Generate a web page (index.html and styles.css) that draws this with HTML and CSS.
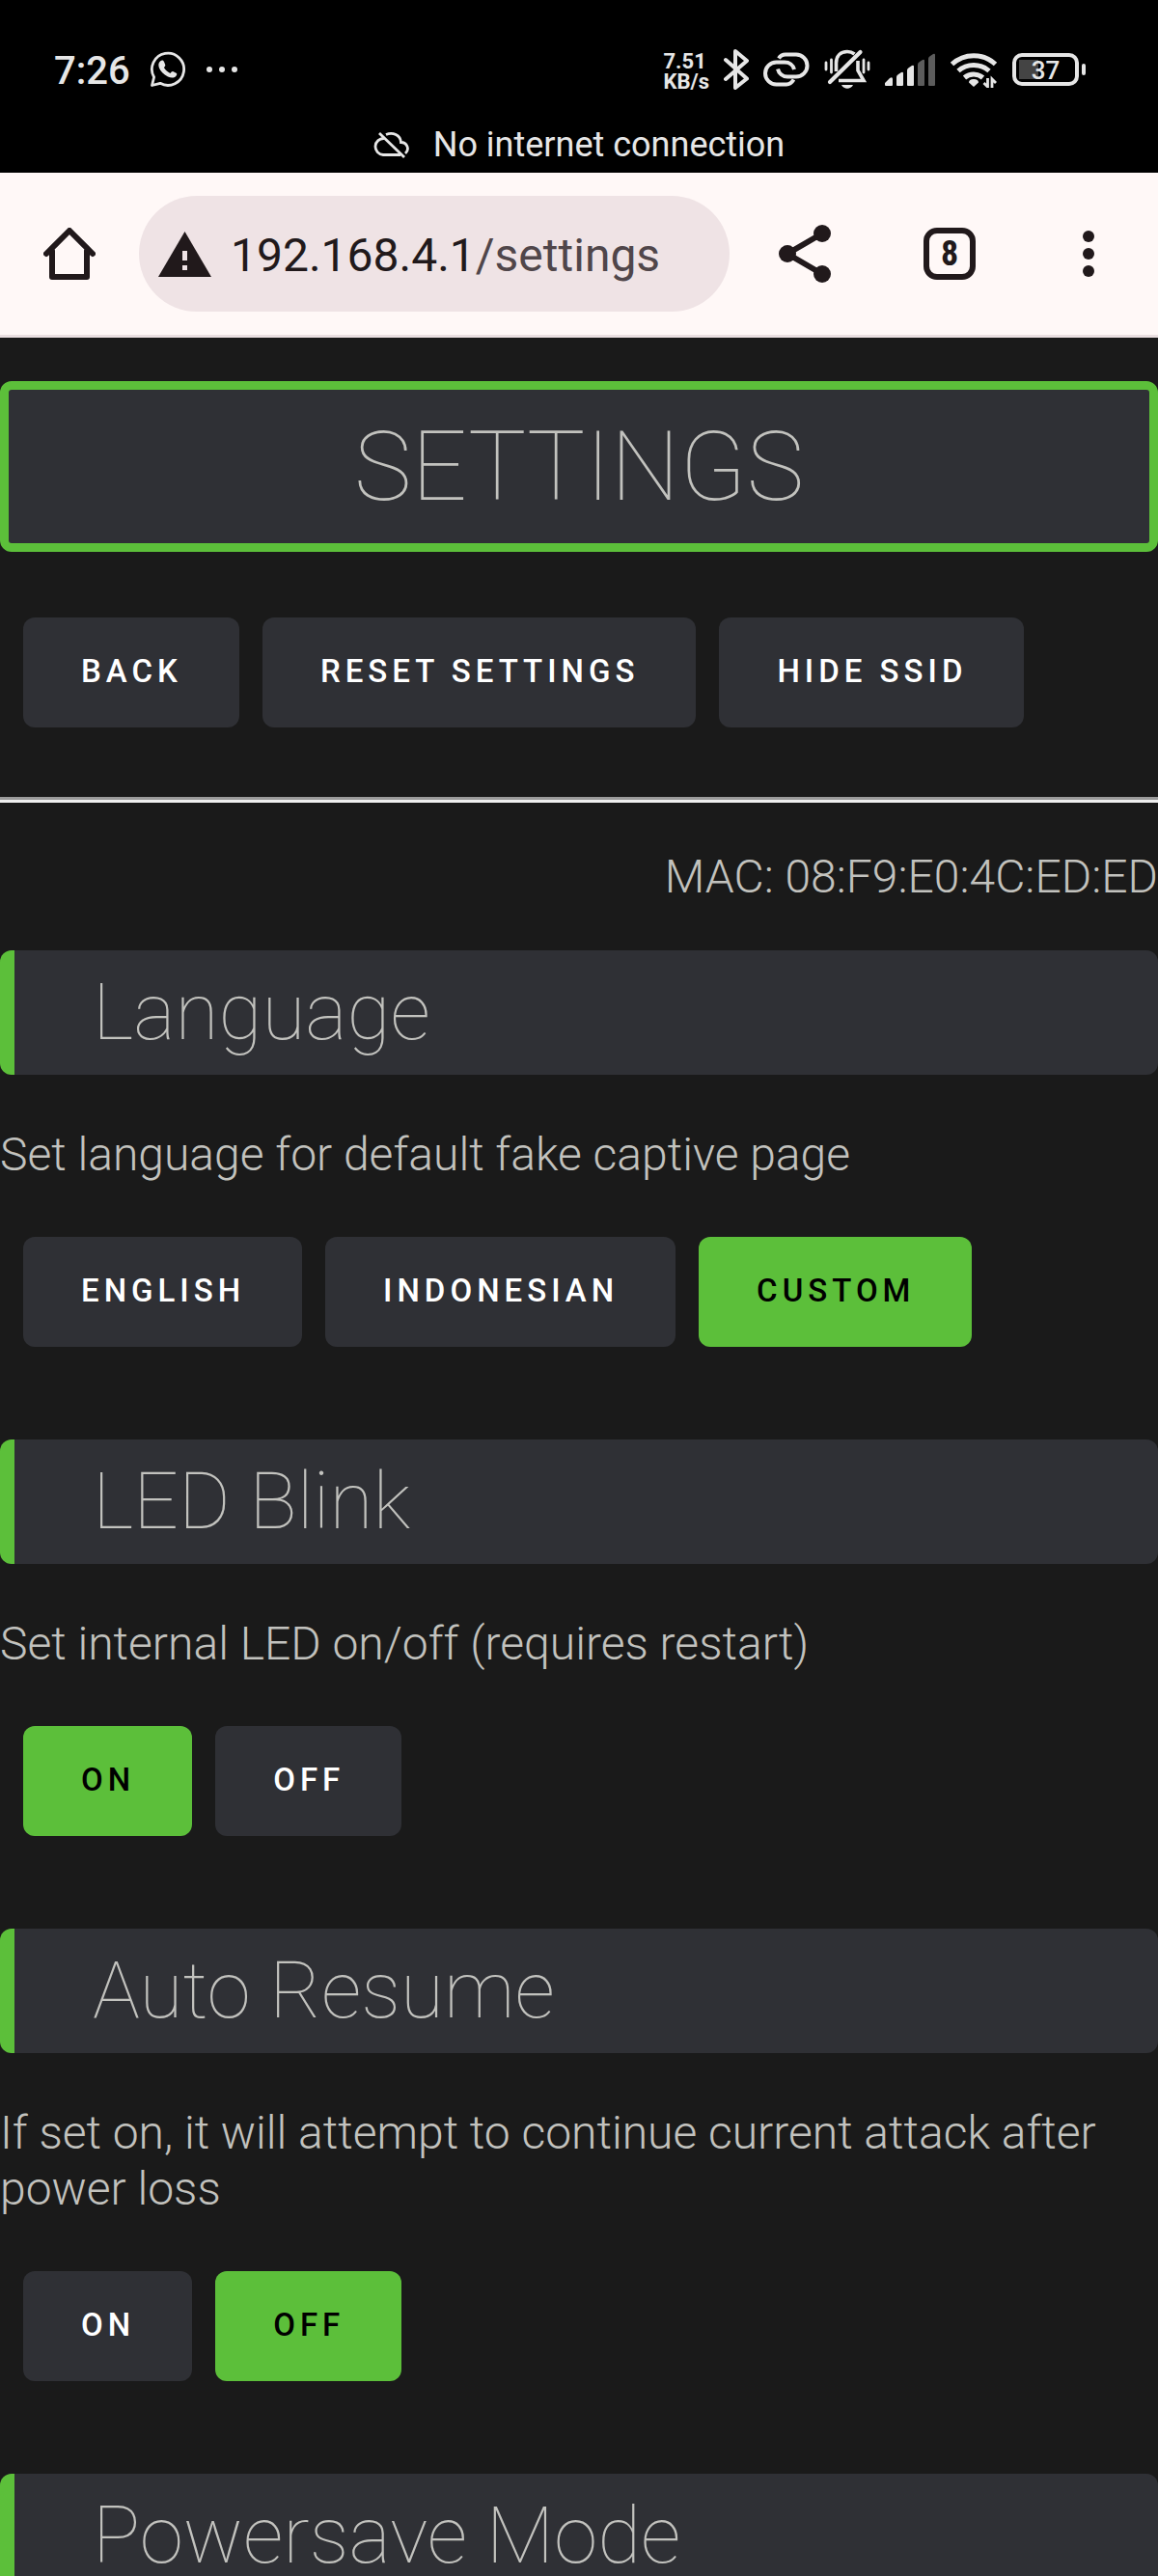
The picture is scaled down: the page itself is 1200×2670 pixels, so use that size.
FILE: index.html
```html
<!DOCTYPE html>
<html lang="en">
<head>
<meta charset="utf-8">
<meta name="viewport" content="width=device-width, initial-scale=1">
<title>Settings</title>
<link rel="stylesheet" href="styles.css">
</head>
<body>
<header class="status">
  <div class="status-row">
    <div class="status-left">
      <span class="clock">7:26</span>
      <svg class="whatsapp" width="38" height="38" viewBox="0 0 38 38" aria-hidden="true">
        <path d="M2.500 35.500 4.600 27A16.600 16.600 0 1 1 11 33.300Z" fill="none" stroke="currentColor" stroke-width="2.800" stroke-linejoin="round"/>
        <path d="M11 10.500c2-1.600 3.500-.8 4 .6l1.200 3c.4 1.200-.3 2-1.300 3 1.700 3 3.800 4.700 6.500 5.800 1.200-1.300 2-2.300 3.200-1.700l3 1.500c1.200.6.7 2.200-.3 3.200-2 2-5 1.900-8.300.5-4.600-2-7.800-5.600-9.200-9.400-.9-2.600-.5-5 1.200-6.500z" fill="currentColor"/>
      </svg>
      <svg width="34" height="8" viewBox="0 0 34 8" fill="currentColor" aria-hidden="true"><circle cx="4" cy="4" r="3"/><circle cx="17" cy="4" r="3"/><circle cx="30" cy="4" r="3"/></svg>
    </div>
    <div class="status-right">
      <span class="speed">7.51<br>KB/s</span>
      <svg width="26" height="42" viewBox="0 0 26 42" fill="none" stroke="currentColor" stroke-width="4" stroke-linejoin="round" stroke-linecap="round" aria-hidden="true"><path d="M2 11 24 30.500 12 40V2L24 12 2 31"/></svg>
      <svg class="link" width="48" height="36" viewBox="0 0 48 36" fill="none" stroke="currentColor" stroke-width="4" aria-hidden="true"><path d="M16 6.500C18 3 20 2.500 23 2.500h11a11.500 11.500 0 0 1 0 23h-9c-5 0-9-3.500-10-8"/><path d="M31.500 28.500C29 32.500 27 33.500 24 33.500H13.500a11.500 11.500 0 0 1 0-23H22c5 0 9 3 10 7.500"/></svg>
      <svg class="bell" width="48" height="42" viewBox="0 0 48 42" fill="none" stroke="currentColor" stroke-width="3.600" aria-hidden="true"><path d="M12.500 23V14.500C12.500 7 17 2.500 24 2.500c3 0 5.500 1 7.500 2.500M35 12v10l6 10.500H15"/><path d="M6 34 37.500 3" stroke-width="4.200" stroke-linecap="round"/><path d="M18 37h12c-2.500 5-9.500 5-12 0z" fill="currentColor" stroke="none"/><path d="M2 14v7M7.500 11v13M41 11v13M46 14v7" stroke-width="2.800" stroke-linecap="round"/></svg>
      <svg class="signal" width="52" height="34" viewBox="0 0 52 34" fill="currentColor" aria-hidden="true"><path d="M0 33v-2l5-5q3-2 3 1v6q0 1-1 1H1q-1 0-1-1zM12 33V25q0-2 2-3l3-2q2-1 2 1v12q0 1-1 1h-5q-1 0-1-1zM23 33V18q0-2 2-3l3-2q2-1 2 1v19q0 1-1 1h-5q-1 0-1-1z"/><path d="M34 33V12q0-2 2-3l3-2q2-1 2 1v25q0 1-1 1h-5q-1 0-1-1zM45 33V6q0-2 2-3l3-2q2-1 2 1v31q0 1-1 1h-5q-1 0-1-1z" fill="#5c5c5c"/></svg>
      <svg class="wifi" width="50" height="38" viewBox="0 0 50 38" fill="none" stroke="currentColor" stroke-width="5" aria-hidden="true"><path d="M2.500 13.500a33 33 0 0 1 45 0M9 20.500a24 24 0 0 1 32 0M15.500 27.500a14.500 14.500 0 0 1 19 0"/><path d="m25 37-5-4.500q0-3.500 5-3.500t5 3.500z" fill="currentColor" stroke="none"/><path d="M39.500 28v9l-4-4M44 38v-9l4 4" stroke-width="2.800"/></svg>
      <div class="battery"><span class="battery-text">37</span></div>
    </div>
  </div>
  <div class="offline">
    <svg width="38" height="28" viewBox="0 0 38 28" fill="none" stroke="currentColor" stroke-width="2.800" aria-hidden="true"><path d="M11 7.500A8.500 8.500 0 1 0 10 24.500h18M13 3.500C20 .5 28 4 28.500 11.500c6 0 9.500 7 4.500 11.500M6 2l26 25"/></svg>
    <span>No internet connection</span>
  </div>
</header>

<nav class="toolbar" aria-label="Browser">
  <button class="tool home" aria-label="Home"><svg width="54" height="54" viewBox="0 0 54 54" fill="none" stroke="currentColor" stroke-width="6" stroke-linejoin="round" stroke-linecap="round" aria-hidden="true"><path d="M3 27 27 3l24 24M9 24v27h36V24"/></svg></button>
  <div class="omnibox">
    <svg width="55" height="47" viewBox="0 0 55 47" aria-hidden="true"><path d="M27.500 0 55 47H0Z" fill="currentColor"/><path d="M25 20h5v10h-5zM25 35h5v5h-5z" fill="#efe3e5"/></svg>
    <a class="url" href="#settings">192.168.4.1<span class="path">/settings</span></a>
  </div>
  <div class="tools">
    <button class="tool" aria-label="Share"><svg width="54" height="60" viewBox="0 0 54 60" fill="currentColor" stroke="currentColor" aria-hidden="true"><path d="M45 9 9 30l36 21" fill="none" stroke-width="6"/><g stroke="none"><circle cx="45" cy="9" r="9"/><circle cx="9" cy="30" r="9"/><circle cx="45" cy="51" r="9"/></g></svg></button>
    <button class="tool tabs" aria-label="8 open tabs">8</button>
    <button class="tool" aria-label="Menu"><svg width="12" height="48" viewBox="0 0 12 48" fill="currentColor" aria-hidden="true"><circle cx="6" cy="6" r="6"/><circle cx="6" cy="24" r="6"/><circle cx="6" cy="42" r="6"/></svg></button>
  </div>
</nav>

<main class="page" id="settings">
  <h1 class="title">SETTINGS</h1>
  <div class="buttons">
    <button class="btn">BACK</button>
    <button class="btn">RESET SETTINGS</button>
    <button class="btn">HIDE SSID</button>
  </div>
  <hr class="rule">
  <p class="mac">MAC: 08:F9:E0:4C:ED:ED</p>

  <section class="setting">
    <h2 class="heading">Language</h2>
    <p class="text">Set language for default fake captive page</p>
    <div class="buttons">
      <button class="btn">ENGLISH</button>
      <button class="btn">INDONESIAN</button>
      <button class="btn active">CUSTOM</button>
    </div>
  </section>
  <section class="setting">
    <h2 class="heading">LED Blink</h2>
    <p class="text">Set internal LED on/off (requires restart)</p>
    <div class="buttons">
      <button class="btn active">ON</button>
      <button class="btn">OFF</button>
    </div>
  </section>
  <section class="setting">
    <h2 class="heading">Auto Resume</h2>
    <p class="text">If set on, it will attempt to continue current attack after power loss</p>
    <div class="buttons">
      <button class="btn">ON</button>
      <button class="btn active">OFF</button>
    </div>
  </section>
  <section class="setting">
    <h2 class="heading">Powersave Mode</h2>
  </section>
</main>
</body>
</html>
```
FILE: styles.css
```css
* {
  box-sizing: border-box;
}

html {
  height: 100%;
}

body {
  display: flex;
  flex-direction: column;
  height: 100%;
  margin: 0;
  background: #1a1a1a;
  color: #c2c2be;
  font-family: Roboto, "Liberation Sans", sans-serif;
  font-size: 48px;
  font-weight: 300;
  line-height: 58px;
}

h1, h2, p {
  margin: 0;
}

button {
  border: 0;
  padding: 0;
  background: none;
  color: inherit;
  font-family: inherit;
}

svg {
  display: block;
  flex: none;
}

/* Phone status bar */
.status {
  flex: none;
  padding: 44px 0 8px;
  background: #000;
  color: #e6e6e6;
}

.status-row,
.status-left,
.status-right {
  display: flex;
  align-items: center;
}

.status-row {
  justify-content: space-between;
  height: 56px;
  padding: 0 82px 0 56px;
}

.status-left {
  gap: 20px;
}

.clock {
  padding-top: 4px;
  font-size: 40px;
  font-weight: 500;
  line-height: 48px;
}

.status-right {
  gap: 15px;
}

.speed {
  padding-top: 4px;
  font-size: 22px;
  font-weight: 700;
  line-height: 21px;
}

.battery {
  position: relative;
  width: 69px;
  height: 34px;
  border: 4px solid #e6e6e6;
  border-radius: 10px;
  background: linear-gradient(#444, #444) 3px 3px / 20px 20px no-repeat;
  text-align: center;
}

.battery::after {
  content: "";
  position: absolute;
  top: 7px;
  right: -11px;
  width: 4px;
  height: 12px;
  border-radius: 2px;
  background: #e6e6e6;
}

.battery-text {
  display: block;
  font-size: 26px;
  font-weight: 500;
  line-height: 28px;
}

.offline {
  display: flex;
  align-items: center;
  justify-content: center;
  gap: 24px;
  margin-top: 29px;
  font-size: 36px;
  font-weight: 400;
  line-height: 42px;
}

/* Browser toolbar */
.toolbar {
  display: flex;
  flex: none;
  align-items: center;
  padding: 24px 66px 24px 45px;
  border-bottom: 3px solid #eadfe1;
  background: #fff8f7;
  color: #21191b;
}

.omnibox {
  display: flex;
  flex: 1;
  align-items: center;
  gap: 20px;
  height: 120px;
  margin: 0 51px 0 45px;
  padding: 0 20px;
  border-radius: 60px;
  background: #efe3e5;
}

.url {
  padding-top: 4px;
  color: inherit;
  font-weight: 400;
  text-decoration: none;
}

.path {
  color: #50464a;
}

.tools {
  display: flex;
  align-items: center;
  gap: 96px;
}

.tabs {
  width: 54px;
  height: 54px;
  margin-right: 15px;
  border: 6px solid;
  border-radius: 14px;
  font-family: "Roboto Condensed", Roboto, sans-serif;
  font-size: 36px;
  font-weight: 700;
  line-height: 42px;
}

/* Settings page, scrolls under the toolbar */
.page {
  flex: 1;
  min-height: 0;
  padding-top: 45px;
  overflow-y: auto;
  scrollbar-width: none;
}

.title {
  padding: 20px 0 19px;
  border: 9px solid #5cbf3a;
  border-radius: 12px;
  background: #2f3035;
  font-size: 101px;
  font-weight: 100;
  line-height: 120px;
  text-align: center;
}

.buttons {
  display: flex;
  flex-wrap: wrap;
  gap: 24px;
  padding: 0 24px;
}

.title + .buttons {
  margin-top: 68px;
}

.btn {
  height: 114px;
  padding: 0 59px 2px 60px;
  border-radius: 12px;
  background: #2f3035;
  color: #fff;
  font-size: 33px;
  font-weight: 500;
  letter-spacing: 5px;
  line-height: 40px;
}

.btn.active {
  background: #5cbf3a;
  color: #000;
}

.rule {
  height: 6px;
  margin: 72px 0 48px;
  border: 0;
  border-top: 3px solid #9a9a9a;
  border-bottom: 3px solid #eee;
}

.mac {
  margin-bottom: 47px;
  text-align: right;
}

.heading {
  padding: 24px 81px 25px;
  border-left: 15px solid #5cbf3a;
  border-radius: 12px;
  background: #2f3035;
  font-size: 82px;
  font-weight: 100;
  line-height: 80px;
}

.text {
  margin: 54px 0 56px;
}

.setting {
  margin-bottom: 96px;
}
```
